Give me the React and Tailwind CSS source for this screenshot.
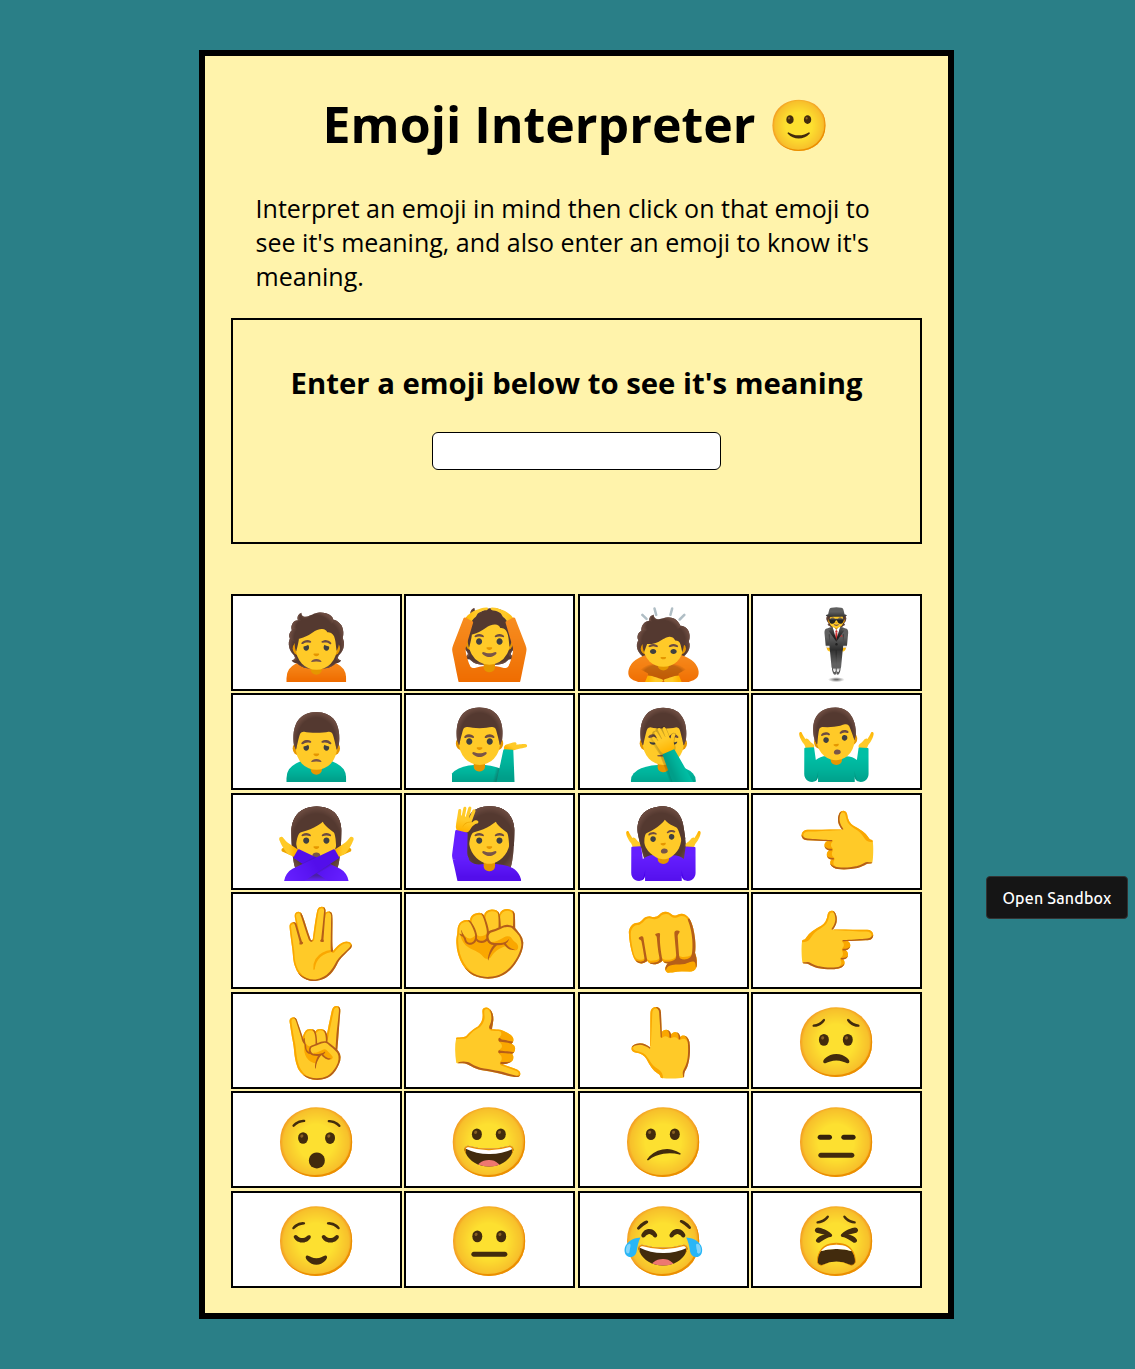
const rows = [
  ['🙍', '🙆', '🙇', '🕴️'],
  ['🙍‍♂️', '💁‍♂️', '🤦‍♂️', '🤷‍♂️'],
  ['🙅‍♀️', '🙋‍♀️', '🤷‍♀️', '👈'],
  ['🖖', '✊', '👊', '👉'],
  ['🤘', '🤙', '👆', '😟'],
  ['😯', '😀', '😕', '😑'],
  ['😌', '😐', '😂', '😫'],
];

export default function App() {
  return (
    <div className="bg-[#2a7f87] min-h-[1369px] pt-[50px] font-['Open_Sans',sans-serif] text-black">
      <div className="w-[755px] h-[1269px] ml-[199px] border-[6px] border-black bg-[#fff3ab] px-[26px]">
        <h1 className="text-[50px] font-bold text-center leading-[68px] pt-[34px]">Emoji Interpreter 🙂</h1>
        <p className="text-[25px] leading-[34px] pl-[24.6px] pr-[25px] mt-[33px]">
          Interpret an emoji in mind then click on that emoji to see it's meaning, and also enter an emoji to know it's meaning.
        </p>
        <div className="mt-[25px] h-[226px] border-2 border-black pt-[43px] flex flex-col items-center">
          <h2 className="text-[29.3px] font-bold leading-[40px]">Enter a emoji below to see it's meaning</h2>
          <input className="mt-[29px] w-[289px] h-[38px] bg-white border border-black rounded-[6px]" />
        </div>
        <div className="mt-[49.75px] grid grid-cols-4 gap-x-[2.1px] gap-y-[2.5px]">
          {rows.flat().map((e, i) => (
            <div key={i} className="h-[97px] bg-white border-2 border-black flex items-center justify-center text-[68px] leading-none">
              {e}
            </div>
          ))}
        </div>
      </div>
      <div className="fixed left-[986px] top-[876px] w-[142px] h-[43px] bg-[#151515] border border-[#333] rounded-[4px] text-white text-[16px] font-medium tracking-[0.2px] font-['Ubuntu','Noto_Sans',sans-serif] flex items-center justify-center">
        Open Sandbox
      </div>
    </div>
  );
}
